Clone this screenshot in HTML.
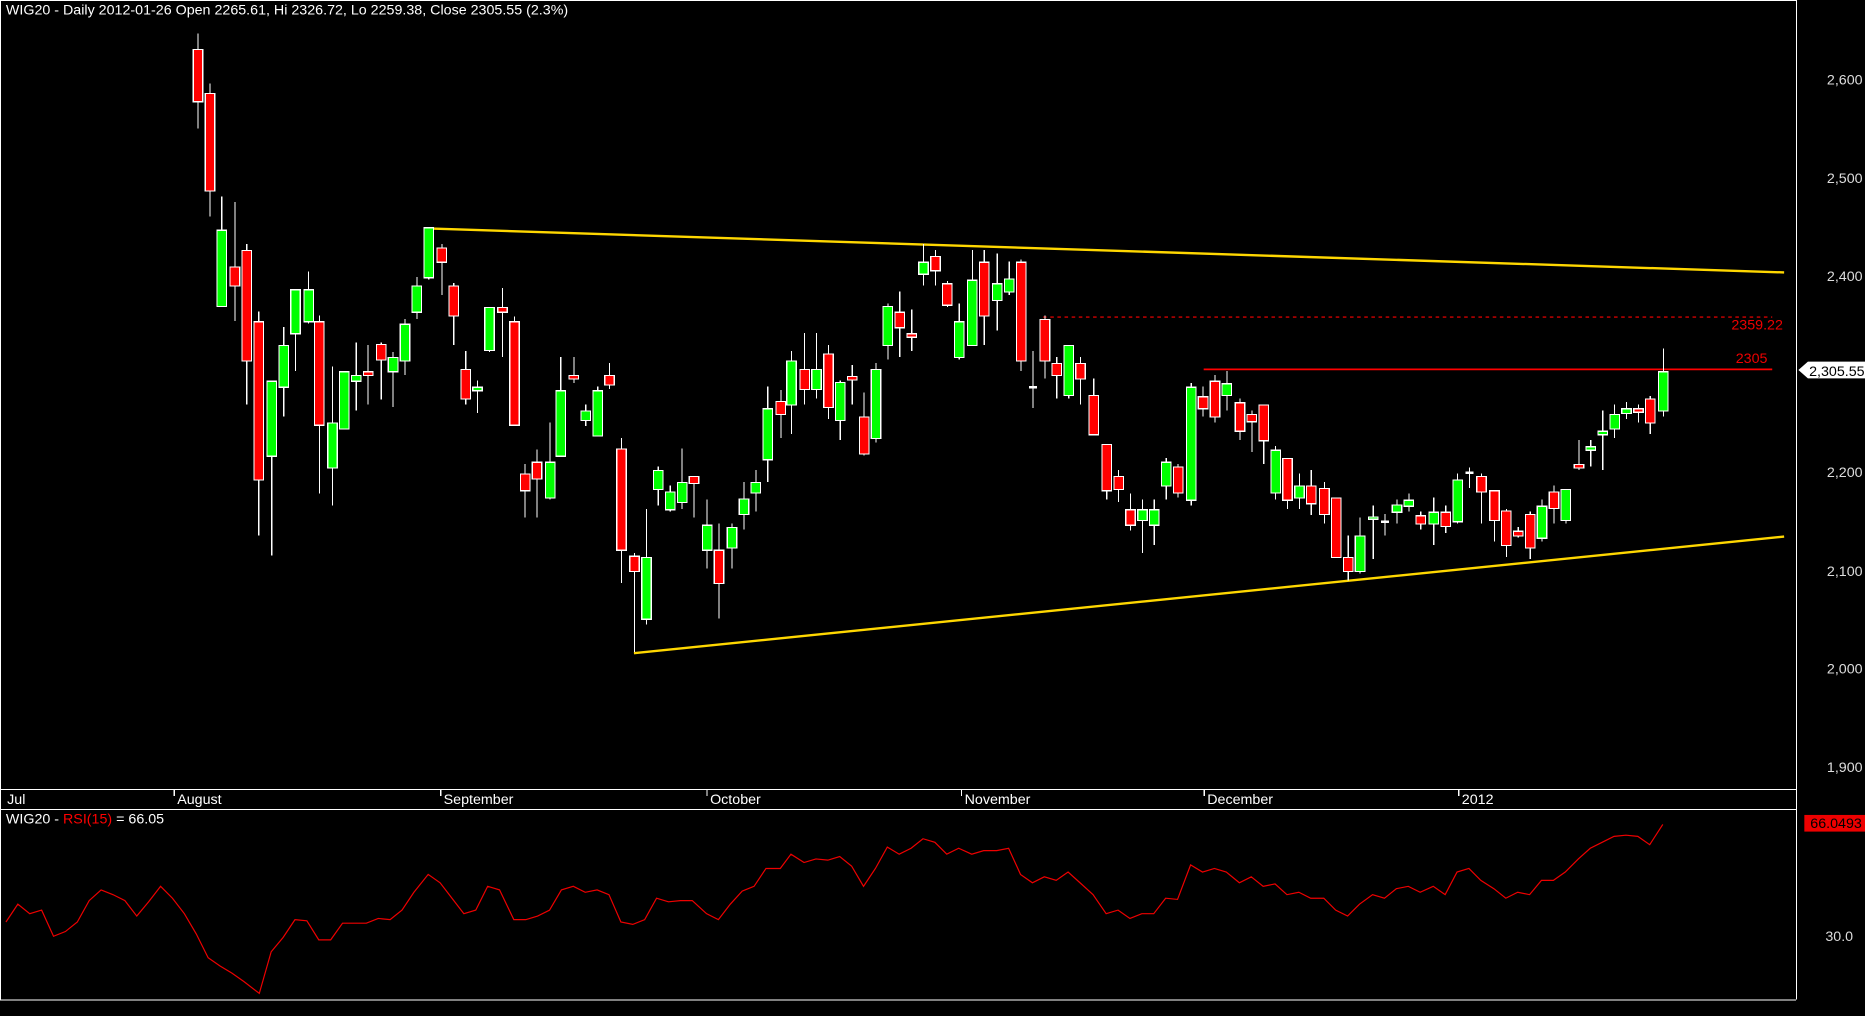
<!DOCTYPE html>
<html><head><meta charset="utf-8"><style>
html,body{margin:0;padding:0;background:#000;overflow:hidden}
svg{display:block}
text{font-family:"Liberation Sans",Arial,sans-serif;font-size:12px}
</style></head><body>
<svg id="s" width="1865" height="1016" viewBox="0 0 1568 854" preserveAspectRatio="none" xmlns="http://www.w3.org/2000/svg">
<rect x="0" y="0" width="1568" height="854" fill="#000"/>
<g stroke="#fff" stroke-width="1" fill="none" shape-rendering="crispEdges">
<line x1="0.5" y1="0" x2="0.5" y2="840"/>
<line x1="1510.5" y1="0" x2="1510.5" y2="840"/>
<line x1="0" y1="0.5" x2="1510" y2="0.5"/>
<line x1="0" y1="663.5" x2="1510" y2="663.5"/>
<line x1="0" y1="680.5" x2="1510" y2="680.5"/>
<line x1="0" y1="840.5" x2="1510" y2="840.5"/>
<line x1="146.5" y1="663" x2="146.5" y2="669"/>
<line x1="370.5" y1="663" x2="370.5" y2="669"/>
<line x1="594.5" y1="663" x2="594.5" y2="669"/>
<line x1="808.5" y1="663" x2="808.5" y2="669"/>
<line x1="1012.5" y1="663" x2="1012.5" y2="669"/>
<line x1="1226.5" y1="663" x2="1226.5" y2="669"/>
</g>
<g fill="#fff">
<text x="5" y="12">WIG20 - Daily 2012-01-26 Open 2265.61, Hi 2326.72, Lo 2259.38, Close 2305.55 (2.3%)</text>
<text x="6" y="676">Jul</text>
<text x="149" y="676">August</text>
<text x="373" y="676">September</text>
<text x="597" y="676">October</text>
<text x="811" y="676">November</text>
<text x="1015" y="676">December</text>
<text x="1229" y="676">2012</text>
<text x="5" y="692">WIG20 - <tspan fill="#f00">RSI(15)</tspan> = 66.05</text>
</g>
<g fill="#ddd" text-anchor="end">
<text x="1566" y="71">2,600</text>
<text x="1566" y="154">2,500</text>
<text x="1566" y="236">2,400</text>
<text x="1566" y="401">2,200</text>
<text x="1566" y="484">2,100</text>
<text x="1566" y="566">2,000</text>
<text x="1566" y="649">1,900</text>
<text x="1558" y="791">30.0</text>
</g>
<g stroke="#ffd700" stroke-width="2" fill="none">
<line x1="360" y1="192" x2="1500" y2="229"/>
<line x1="533" y1="549" x2="1500" y2="451"/>
</g>
<line x1="877" y1="266.5" x2="1490" y2="266.5" stroke="#f00" stroke-width="1" stroke-dasharray="3,3"/>
<line x1="1012" y1="310.5" x2="1490" y2="310.5" stroke="#f00" stroke-width="1.5"/>
<text x="1499" y="277" fill="#e00" text-anchor="end">2359.22</text>
<text x="1486" y="305" fill="#e00" text-anchor="end">2305</text>
<path d="M1512 311 L1520 304 L1568 304 L1568 318 L1520 318 Z" fill="#fff"/>
<text x="1521" y="316" fill="#000">2,305.55</text>
<rect x="1517" y="685" width="51" height="14" fill="#e00"/>
<text x="1522" y="696" fill="#000">66.0493</text>
<g id="c" shape-rendering="crispEdges"></g>
<polyline id="rsi" fill="none" stroke="#e00" stroke-width="1"/>
</svg>
<script>
var d=[
[166,'r',41,85,28,108],[176,'r',78,160,70,182],[186,'g',193,257,165,257],[197,'r',224,240,170,270],[207,'r',210,303,205,340],[217,'r',270,403,262,450],[228,'g',320,383,320,467],[238,'g',290,325,275,350],[248,'g',243,280,243,312],[259,'g',243,270,228,272],[268,'r',270,357,265,415],[279,'g',355,393,308,425],[289,'g',312,360,312,360],[299,'g',315,320,288,345],[309,'r',312,315,290,340],[320,'r',289,302,288,336],[330,'g',300,312,296,342],[340,'g',272,303,268,315],[350,'g',240,262,233,268],[360,'g',191,233,191,235],[371,'r',208,220,205,248],[381,'r',240,265,238,290],[391,'r',310,335,295,340],[401,'g',325,328,320,347],[411,'g',258,294,258,296],[422,'r',258,262,242,300],[432,'r',270,357,266,357],[441,'r',398,412,390,435],[451,'r',388,402,378,435],[462,'g',388,418,355,420],[471,'g',328,383,300,383],[482,'r',315,318,300,322],[492,'g',345,353,340,358],[502,'g',328,366,325,366],[512,'r',315,323,305,327],[522,'r',377,462,368,490],[533,'r',467,480,465,548],[543,'g',468,520,428,525],[553,'g',395,411,392,425],[563,'g',413,428,408,430],[573,'g',405,422,377,428],[583,'r',400,406,400,435],[594,'g',441,462,420,478],[604,'r',462,490,440,520],[615,'g',443,460,440,478],[625,'g',419,432,405,445],[635,'g',405,414,395,430],[645,'g',343,386,325,405],[656,'r',337,348,328,368],[665,'g',303,340,295,365],[676,'r',310,327,280,340],[686,'g',310,327,280,335],[696,'r',297,342,290,352],[706,'g',321,353,320,370],[716,'r',316,319,307,340],[726,'r',350,381,330,383],[736,'g',310,368,305,372],[746,'g',257,290,255,302],[756,'r',262,275,245,300],[766,'r',280,283,260,295],[776,'g',220,230,205,240],[786,'r',215,227,210,240],[796,'r',238,256,236,258],[806,'g',270,300,255,302],[817,'g',235,290,210,290],[827,'r',220,265,210,290],[838,'g',238,252,213,278],[848,'g',234,245,220,248],[858,'r',220,303,218,312],[868,'w',325,325,295,343],[878,'r',268,303,265,318],[888,'r',305,315,300,335],[898,'g',290,332,290,335],[908,'r',305,318,300,340],[919,'r',332,365,318,365],[930,'r',373,412,373,420],[940,'r',400,411,395,422],[950,'r',428,441,415,446],[960,'g',428,437,420,465],[970,'g',428,441,420,458],[980,'g',388,408,385,420],[990,'r',392,414,390,418],[1001,'g',325,420,322,425],[1011,'r',333,343,325,350],[1021,'r',320,350,315,355],[1031,'g',322,332,312,345],[1042,'r',338,362,335,370],[1052,'r',348,354,345,380],[1062,'r',340,370,340,390],[1072,'g',378,414,375,420],[1082,'r',385,420,385,428],[1092,'g',408,418,398,428],[1102,'r',408,423,395,433],[1113,'r',410,432,405,440],[1123,'r',418,468,418,468],[1133,'r',468,480,450,488],[1143,'g',450,480,435,482],[1154,'g',434,436,425,470],[1164,'w',438,438,432,450],[1174,'g',424,430,420,440],[1184,'g',420,425,415,430],[1194,'r',433,440,430,445],[1205,'g',430,440,418,458],[1215,'r',430,442,425,448],[1225,'g',403,438,398,440],[1235,'w',397,397,393,410],[1245,'r',400,413,398,440],[1256,'r',412,437,412,455],[1266,'r',429,458,428,468],[1276,'r',446,450,443,452],[1286,'r',432,460,430,470],[1296,'g',425,452,420,455],[1306,'r',413,427,408,440],[1316,'g',411,437,411,440],[1327,'r',390,393,370,395],[1337,'g',375,378,370,392],[1347,'g',362,365,345,395],[1357,'g',348,360,340,368],[1367,'g',343,347,338,352],[1377,'r',343,346,340,355],[1387,'r',335,355,333,365],[1398,'g',312,345,293,350]];
var ns='http://www.w3.org/2000/svg',g=document.getElementById('c'),h='';
d.forEach(function(c){var x=c[0],col=c[1]=='g'?'#00ff00':c[1]=='r'?'#ff0000':'#fff';
h+='<line x1="'+(x+0.5)+'" y1="'+c[4]+'" x2="'+(x+0.5)+'" y2="'+c[5]+'" stroke="#fff"/>';
var t=c[2],b=c[3];if(b-t<2){b=t+2;}
if(c[1]=='w'){h+='<line x1="'+(x-3)+'" y1="'+(t+0.5)+'" x2="'+(x+4)+'" y2="'+(t+0.5)+'" stroke="#fff" stroke-width="2"/>';}
else h+='<rect x="'+(x-3.5)+'" y="'+(t+0.5)+'" width="8" height="'+(b-t)+'" fill="'+col+'" stroke="#fff" stroke-width="1"/>';});
g.innerHTML=h;
document.getElementById('rsi').setAttribute('points','5,775 15,760 25,768 35,765 45,787 55,783 65,775 75,757 85,748 95,752 105,757 115,770 125,758 135,745 145,755 155,768 165,785 175,805 185,812 195,818 205,825 218,835 228,800 238,788 248,773 258,774 268,790 278,790 288,776 298,776 308,776 318,772 328,773 338,765 348,750 360,735 370,742 380,755 390,768 400,765 410,745 420,748 432,773 442,773 452,770 462,765 472,748 482,745 492,750 502,748 512,752 522,775 532,777 542,773 552,755 562,758 572,757 582,757 594,768 604,773 614,760 624,749 634,745 644,730 656,730 665,718 676,725 686,722 696,723 706,720 716,728 726,745 736,730 746,712 756,718 766,713 776,705 786,708 796,718 806,713 817,718 827,715 838,715 848,713 858,735 868,742 878,737 888,740 898,733 908,742 919,752 930,768 940,765 950,772 960,768 970,768 980,755 990,756 1001,727 1011,733 1021,730 1031,733 1042,742 1052,737 1062,745 1072,743 1082,752 1092,750 1102,755 1113,755 1123,765 1133,770 1143,760 1154,752 1164,755 1174,747 1184,745 1194,750 1205,745 1215,752 1225,733 1235,730 1245,740 1256,747 1266,755 1276,750 1286,752 1296,740 1306,740 1316,733 1327,722 1337,713 1347,708 1357,703 1367,702 1377,703 1387,710 1398,693');
</script>
</body></html>
